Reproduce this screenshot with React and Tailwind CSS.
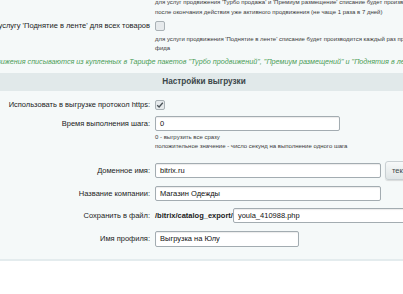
import React from "react";

const Row = ({ label, children, className = "" }) => (
  <div className={"flex items-center " + className}>
    <div className="w-[155px] shrink-0 flex justify-end whitespace-nowrap pr-[5px] text-[7.5px] text-[#1b1b1b]">
      {label}
    </div>
    <div className="flex-1 flex items-center min-w-0">{children}</div>
  </div>
);

const Box = ({ checked }) => (
  <span className="w-[10px] h-[10px] rounded-[2px] border border-[#a9b1b5] bg-[#e6eaec] flex items-center justify-center">
    {checked && (
      <svg width="8" height="8" viewBox="0 0 8 8">
        <path d="M1.2 4.2 L3.1 6 L6.8 1.8" fill="none" stroke="#4a5257" strokeWidth="1.3" />
      </svg>
    )}
  </span>
);

const Field = ({ value, className = "" }) => (
  <div
    className={
      "h-[15px] shrink-0 rounded-[2px] border border-[#a3acb1] bg-white shadow-[inset_0_1px_1px_rgba(0,0,0,0.08)] flex items-center px-[4px] text-[7.5px] text-[#111] whitespace-nowrap " +
      className
    }
  >
    {value}
  </div>
);

const Hint = ({ children, className = "" }) => (
  <div className={"pl-[155px] text-[6px] leading-[9px] text-[#3a3a3a] whitespace-nowrap " + className}>
    {children}
  </div>
);

export default function App() {
  return (
    <div className="w-[403px] h-[294px] overflow-hidden bg-white font-['Liberation_Sans',Arial,sans-serif]">
      <div className="bg-[#f5f9f9] border-b-2 border-[#e4ecee] pb-[12px]">
        <Hint className="-mt-[3px] leading-[10px]">
          для услуг продвижения 'Турбо продажа' и 'Премиум размещение' списание будет производится
          <br />
          после окончания действия уже активного продвижения (не чаще 1 раза в 7 дней)
        </Hint>

        <Row label="услугу 'Поднятие в ленте' для всех товаров" className="h-[18px]">
          <Box />
        </Row>

        <Hint className="leading-[8px]">
          для услуги продвижения 'Поднятие в ленте' списание будет производится каждый раз при выгрузке
          <br />
          фида
        </Hint>

        <div className="h-[16px] mt-[1px] pr-[44px] flex justify-center whitespace-nowrap overflow-hidden">
          <span className="text-[7.2px] italic text-[#4a9c56] leading-[16px]">
            Стоимость продвижения списываются из купленных в Тарифе пакетов "Турбо продвижений", "Премиум размещений" и "Поднятия в ленте"
          </span>
        </div>

        <div className="mt-[3px] h-[18px] bg-[#e1e9ea] flex items-center justify-center">
          <span className="pl-[5px] text-[8.2px] font-bold text-[#3b4649]">Настройки выгрузки</span>
        </div>

        <Row label="Использовать в выгрузке протокол https:" className="h-[16px] mt-[6px]">
          <Box checked />
        </Row>

        <Row label="Время выполнения шага:" className="mt-[3px]">
          <Field value="0" className="w-[185px]" />
        </Row>

        <Hint className="mt-[2px]">
          0 - выгрузить все сразу
          <br />
          положительное значение - число секунд на выполнение одного шага
        </Hint>

        <Row label="Доменное имя:" className="h-[19px] mt-[10px]">
          <Field value="bitrix.ru" className="w-[226px]" />
          <div className="ml-[4px] h-[19px] px-[6px] rounded-[3px] border border-[#c9d0d3] bg-gradient-to-b from-[#f7f9f9] to-[#dfe5e6] shadow-[0_1px_1px_rgba(0,0,0,0.12)] flex items-center text-[7.5px] text-[#3b4649] whitespace-nowrap">
            текущий
          </div>
        </Row>

        <Row label="Название компании:" className="h-[15px] mt-[6px]">
          <Field value="Магазин Одежды" className="w-[226px]" />
        </Row>

        <Row label="Сохранить в файл:" className="h-[15px] mt-[7px]">
          <span className="text-[7.5px] font-bold text-[#1b1b1b] whitespace-nowrap">/bitrix/catalog_export/</span>
          <Field value="youla_410988.php" className="w-[200px]" />
        </Row>

        <Row label="Имя профиля:" className="h-[16px] mt-[8px]">
          <Field value="Выгрузка на Юлу" className="w-[144px] h-[16px]" />
        </Row>
      </div>
    </div>
  );
}
